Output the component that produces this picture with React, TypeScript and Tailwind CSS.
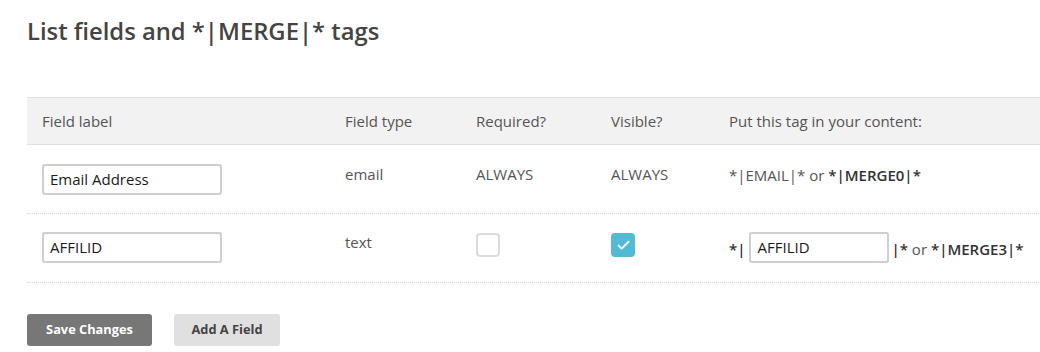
import { Check } from "lucide-react";

const cols = "grid grid-cols-[303px_131px_135px_118px_1fr]";

const TextBox = ({ value, width }: { value: string; width: string }) => (
  <div
    className={`${width} h-[31px] rounded-[3px] border-2 border-[#cfcfcf] bg-white px-[6px] text-[15px] leading-[27px] text-[#1a1a1a]`}
  >
    {value}
  </div>
);

const Box = ({ checked }: { checked?: boolean }) =>
  checked ? (
    <div className="flex h-6 w-6 items-center justify-center rounded-[4px] bg-[#52bad5]">
      <Check size={15} strokeWidth={3} color="white" />
    </div>
  ) : (
    <div className="h-6 w-6 rounded-[4px] border-2 border-[#dcdcdc] bg-white" />
  );

export default function App() {
  return (
    <div className="h-[352px] w-[1040px] overflow-hidden bg-white pl-[27px] font-['Open_Sans',sans-serif] text-[15px] text-[#555]">
      <h1 className="pt-[14px] text-[23.8px] font-semibold leading-[34px] text-[#444]">
        List fields and *|MERGE|* tags
      </h1>

      <div className="mt-[49px] w-[1100px]">
        <div
          className={`${cols} h-[48px] items-center border-y border-[#e0e0e0] bg-[#f2f2f2] text-[#555]`}
        >
          <div className="pl-[15px]">Field label</div>
          <div className="pl-[15px]">Field type</div>
          <div className="pl-[15px]">Required?</div>
          <div className="pl-[15px]">Visible?</div>
          <div className="pl-[15px]">Put this tag in your content:</div>
        </div>

        <div
          className={`${cols} h-[69px] border-b border-dotted border-[#d8d8d8] pt-[19px] leading-[20px]`}
        >
          <div className="pl-[15px]">
            <TextBox value="Email Address" width="w-[180px]" />
          </div>
          <div className="pl-[15px]">email</div>
          <div className="pl-[15px]">ALWAYS</div>
          <div className="pl-[15px]">ALWAYS</div>
          <div className="pl-[15px] pt-[1px]">
            *|EMAIL|* or{" "}
            <span className="font-semibold text-[#333]">*|MERGE0|*</span>
          </div>
        </div>

        <div
          className={`${cols} h-[69px] border-b border-dotted border-[#d8d8d8] pt-[18px] leading-[20px]`}
        >
          <div className="pl-[15px]">
            <TextBox value="AFFILID" width="w-[180px]" />
          </div>
          <div className="pl-[15px]">text</div>
          <div className="pl-[15px] pt-[1px]">
            <Box />
          </div>
          <div className="pl-[15px] pt-[1px]">
            <Box checked />
          </div>
          <div className="flex items-start pl-[15px]">
            <span className="pt-[7px] font-semibold text-[#333]">*|</span>
            <div className="ml-[4px]">
              <TextBox value="AFFILID" width="w-[140px]" />
            </div>
            <span className="pl-[2px] pt-[7px]">
              <span className="font-semibold text-[#333]">|*</span> or{" "}
              <span className="font-semibold text-[#333]">*|MERGE3|*</span>
            </span>
          </div>
        </div>
      </div>

      <div className="mt-[31px] flex gap-[22px]">
        <button className="h-[32px] w-[125px] rounded-[3px] bg-[#777] text-[12.8px] font-bold text-white">
          Save Changes
        </button>
        <button className="h-[32px] w-[106px] rounded-[3px] bg-[#e0e0e0] text-[12.8px] font-bold text-[#444]">
          Add A Field
        </button>
      </div>
    </div>
  );
}
